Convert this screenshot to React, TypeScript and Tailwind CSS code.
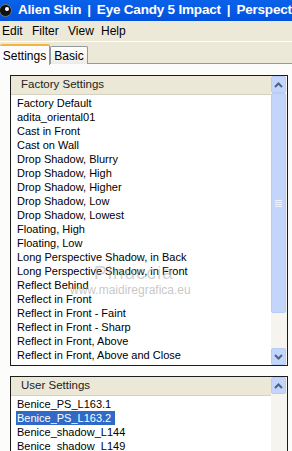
import React from 'react'

const factoryItems = [
  'Factory Default',
  'adita_oriental01',
  'Cast in Front',
  'Cast on Wall',
  'Drop Shadow, Blurry',
  'Drop Shadow, High',
  'Drop Shadow, Higher',
  'Drop Shadow, Low',
  'Drop Shadow, Lowest',
  'Floating, High',
  'Floating, Low',
  'Long Perspective Shadow, in Back',
  'Long Perspective Shadow, in Front',
  'Reflect Behind',
  'Reflect in Front',
  'Reflect in Front - Faint',
  'Reflect in Front - Sharp',
  'Reflect in Front, Above',
  'Reflect in Front, Above and Close',
]

const userItems = ['Benice_PS_L163.1', 'Benice_PS_L163.2', 'Benice_shadow_L144', 'Benice_shadow_L149']

const Arrow = ({ up }: { up?: boolean }) => (
  <svg width="9" height="6" viewBox="0 0 9 6">
    <path d={up ? 'M1 5 L4.5 1.5 L8 5' : 'M1 1 L4.5 4.5 L8 1'} fill="none" stroke="#4d6185" strokeWidth="2" />
  </svg>
)

const ScrollButton = ({ up }: { up?: boolean }) => (
  <div className="h-[17px] w-[15px] flex items-center justify-center rounded-[2px] border border-[#b7cbf6] bg-[#c4d5fc]">
    <Arrow up={up} />
  </div>
)

function ListBox({
  title,
  items,
  selected,
  height,
  full,
}: {
  title: string
  items: string[]
  selected?: number
  height: string
  full?: boolean
}) {
  return (
    <div className={`mx-[10px] w-[278px] border border-[#1c1c1c] bg-white flex ${height}`}>
      <div className="flex-1 flex flex-col overflow-hidden">
        <div className="h-[19px] shrink-0 bg-[#ebe8d8] border-b border-[#d6d2c2] pl-[10px] flex items-center text-[11.5px] text-[#222]">
          {title}
        </div>
        <div className="pt-[1px]">
          {items.map((it, i) => (
            <div key={it} className="h-[14px] pl-[5px] flex items-center text-[11px] leading-[14px] text-black whitespace-nowrap">
              <span className={i === selected ? 'bg-[#316ac5] text-white pl-[1px] pr-[4px]' : 'pl-[1px]'}>{it}</span>
            </div>
          ))}
        </div>
      </div>
      <div className="w-[16px] shrink-0 bg-[#f5f4ee] flex flex-col items-start">
        <ScrollButton up />
        {full && (
          <>
            <div className="h-[220px] w-[15px] rounded-[2px] border border-[#b7cbf6] bg-[#c4d5fc] flex items-center justify-center">
              <div className="flex flex-col gap-[1px]">
                <div className="w-[7px] h-[1px] bg-[#eef3fe]" />
                <div className="w-[7px] h-[1px] bg-[#eef3fe]" />
                <div className="w-[7px] h-[1px] bg-[#eef3fe]" />
                <div className="w-[7px] h-[1px] bg-[#eef3fe]" />
              </div>
            </div>
            <div className="flex-1" />
            <ScrollButton />
          </>
        )}
      </div>
    </div>
  )
}

export default function App() {
  return (
    <div
      className="w-[292px] h-[451px] overflow-hidden bg-[#ece9d8] relative"
      style={{ fontFamily: '"Liberation Sans", Arial, sans-serif' }}
    >
      {/* title bar */}
      <div className="h-[21px] bg-gradient-to-b from-[#0b62ea] to-[#0251dd] flex items-center whitespace-nowrap overflow-hidden text-white font-bold text-[13.5px] tracking-[-0.2px]">
        <div className="w-[13px] h-[13px] -ml-[1px] mr-[6px] shrink-0 rounded-full bg-[#111] border border-[#777] flex items-start justify-end">
          <div className="w-[4px] h-[4px] mt-[2px] mr-[2px] rounded-full bg-white" />
        </div>
        <span>Alien Skin</span>
        <span className="mx-[6px]">|</span>
        <span>Eye Candy 5 Impact</span>
        <span className="mx-[6px]">|</span>
        <span>Perspective Shadow</span>
      </div>

      {/* menu */}
      <div className="h-[21px] flex items-center text-[12px] text-black border-b border-white">
        <span className="ml-[2px] w-[30px]">Edit</span>
        <span className="w-[36px]">Filter</span>
        <span className="w-[33px]">View</span>
        <span>Help</span>
      </div>

      {/* tabs */}
      <div className="h-[22px] flex items-end relative">
        <div className="h-[21px] w-[50px] bg-[#fcfcfe] border-t-[2px] border-[#f4b53b] border-r border-r-[#919b9c] flex items-center justify-center text-[12px] text-black relative z-10 -mb-[1px] rounded-t-[2px]">
          Settings
        </div>
        <div className="h-[18px] w-[38px] bg-gradient-to-b from-[#ffffff] to-[#ecebe5] border border-[#919b9c] border-b-0 flex items-center justify-center text-[12px] text-black rounded-t-[2px]">
          Basic
        </div>
        <div className="flex-1 border-b border-[#919b9c]" />
      </div>

      {/* panel */}
      <div className="bg-[#fcfcfb] pt-[11px] pb-[10px] h-[400px]">
        <ListBox title="Factory Settings" items={factoryItems} height="h-[291px]" full />
        <div className="h-[10px]" />
        <ListBox title="User Settings" items={userItems} selected={1} height="h-[90px]" />
      </div>

      {/* watermark */}
      <div className="absolute left-[94px] top-[259px] text-[19px] text-[#b4b4b4]/60 tracking-[1px] pointer-events-none">
        Pinuccia
      </div>
      <div className="absolute left-[70px] top-[281px] text-[12px] text-[#a0a0a0]/60 pointer-events-none">
        www.maidiregrafica.eu
      </div>
    </div>
  )
}
